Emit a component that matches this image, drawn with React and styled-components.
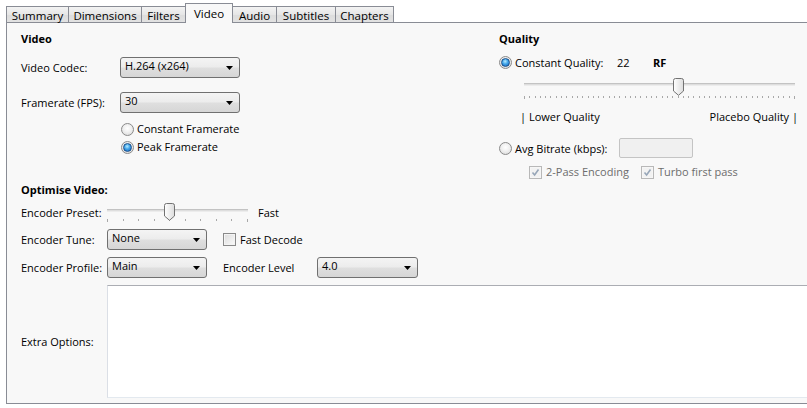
import React from 'react';
import styled, { createGlobalStyle } from 'styled-components';

const Global = createGlobalStyle`
  html, body { margin: 0; padding: 0; background: #ffffff; overflow: hidden; }
  body { font-family: "Open Sans", "Noto Sans", sans-serif; font-size: 11px; color: #000; }
  * { box-sizing: border-box; }
`;

const Page = styled.div`
  width: 807px;
  height: 408px;
  padding: 3px 0 0 6px;
  overflow: hidden;
`;

const TabStrip = styled.div`
  display: flex;
  align-items: flex-end;
  height: 19px;
  position: relative;
  z-index: 1;
`;

const Tab = styled.div`
  width: ${p => p.$w}px;
  height: ${p => (p.$active ? 20 : 16)}px;
  margin-left: ${p => (p.$first ? 0 : -1)}px;
  margin-bottom: ${p => (p.$active ? -1 : 0)}px;
  border: 1px solid #898c95;
  border-bottom: none;
  background: ${p => (p.$active ? '#f8f8f8' : 'linear-gradient(#f3f3f3, #e6e6e6 50%, #dcdcdc 51%, #e2e2e2)')};
  display: flex;
  align-items: center;
  justify-content: center;
  padding-top: ${p => (p.$active ? 0 : 1)}px;
  position: relative;
  z-index: ${p => (p.$active ? 2 : 1)};
  white-space: nowrap;
  font-size: 11.5px;
`;

const Panel = styled.div`
  width: 830px;
  height: 382px;
  border: 1px solid #898c95;
  border-right: none;
  background: #f8f8f8;
  padding: 8px 0 0 14px;
  display: flex;
  flex-direction: column;
`;

const TopSection = styled.div`
  display: flex;
  height: 151px;
  align-items: flex-start;
`;

const LeftCol = styled.div`
  width: 478px;
  display: flex;
  flex-direction: column;
`;

const RightCol = styled.div`
  display: flex;
  flex-direction: column;
`;

const SectionTitle = styled.div`
  font-weight: 700;
  line-height: 16px;
  height: 16px;
  margin-top: ${p => p.$mt || 0}px;
`;

const FieldRow = styled.div`
  display: grid;
  grid-template-columns: ${p => p.$label}px auto auto auto;
  justify-content: start;
  align-items: center;
  height: ${p => p.$h || 21}px;
  margin-top: ${p => p.$mt || 0}px;
  white-space: nowrap;
`;

const Label = styled.span`
  line-height: 16px;
  color: ${p => (p.$disabled ? '#6d6d6d' : '#000')};
`;

const LevelLabel = styled(Label)`
  width: 110px;
  padding-left: 16px;
`;

const SelectBox = styled.div`
  width: ${p => p.$w}px;
  height: ${p => p.$h || 21}px;
  border: 1px solid #707070;
  border-radius: 3px;
  background: linear-gradient(#f4f4f4 0%, #ececec 48%, #dfdfdf 52%, #d6d6d6 100%);
  display: flex;
  align-items: center;
  justify-content: space-between;
  padding: 0 6px 3px 4px;
  line-height: 14px;
`;

const Arrow = styled.svg`
  width: 7px;
  height: 4px;
  margin-top: 4px;
`;

const Select = ({ w, value, h }) => (
  <SelectBox $w={w} $h={h}>
    <span>{value}</span>
    <Arrow viewBox="0 0 7 4"><path d="M0 0 H7 L3.5 4 Z" fill="#000" /></Arrow>
  </SelectBox>
);

const RadioGroup = styled.div`
  display: flex;
  flex-direction: column;
  margin: ${p => p.$mt || 0}px 0 0 ${p => p.$ml || 0}px;
`;

const OptionRow = styled.div`
  display: flex;
  align-items: center;
  gap: ${p => p.$gap ?? 3}px;
  height: ${p => p.$h || 18}px;
  margin: ${p => p.$mt || 0}px 0 0 ${p => p.$ml || 0}px;
  white-space: nowrap;
`;

const RadioCircle = styled.span`
  width: 13px;
  height: 13px;
  border-radius: 50%;
  border: 1px solid #8a8a8a;
  background: radial-gradient(circle at 50% 40%, #ffffff 0%, #f0f0f0 45%, #d4d4d4 100%);
  display: inline-flex;
  align-items: center;
  justify-content: center;
  flex: none;
  &::after {
    content: '';
    display: ${p => (p.$checked ? 'block' : 'none')};
    width: 7px;
    height: 7px;
    border-radius: 50%;
    border: 1px solid #1b4f8a;
    background: radial-gradient(circle at 45% 35%, #b8ecff 0%, #3fa3e8 45%, #1560b8 100%);
  }
`;

const CheckBox = styled.span`
  width: 13px;
  height: 13px;
  border: 1px solid ${p => (p.$disabled ? '#b8b8b8' : '#8a8a8a')};
  background: ${p => (p.$disabled ? '#f2f2f2' : 'linear-gradient(135deg, #dcdcdc, #fbfbfb)')};
  box-shadow: inset 0 0 0 1px ${p => (p.$disabled ? '#f6f6f6' : '#f4f4f4')};
  display: inline-flex;
  align-items: center;
  justify-content: center;
  flex: none;
`;

const CheckMark = styled.svg`
  width: 9px;
  height: 9px;
`;

const Check = ({ checked, disabled }) => (
  <CheckBox $disabled={disabled}>
    {checked && (
      <CheckMark viewBox="0 0 9 9">
        <path d="M1.5 4.5 L3.6 7 L7.5 1.5" fill="none" stroke={disabled ? '#97a6b8' : '#2b4f7e'} strokeWidth="1.6" />
      </CheckMark>
    )}
  </CheckBox>
);

const SliderBox = styled.div`
  position: relative;
  width: ${p => p.$w}px;
  height: ${p => p.$h}px;
  margin: ${p => p.$mt || 0}px 0 0 ${p => p.$ml || 0}px;
  flex: none;
`;

const Track = styled.div`
  position: absolute;
  left: 0;
  right: 0;
  top: ${p => p.$top}px;
  height: 3px;
  border-top: 1px solid #c3c3c3;
  border-bottom: 1px solid #ececec;
  background: #dedede;
`;

const Ticks = styled.svg`
  position: absolute;
  left: 0;
  top: ${p => p.$top}px;
  overflow: visible;
`;

const ThumbSvg = styled.svg`
  position: absolute;
  top: ${p => p.$top}px;
  width: 11px;
  height: 18px;
`;

const Slider = ({ width, height, count, value, trackTop, thumbTop, tickTop, tickLen, mt, ml }) => {
  const step = width / (count - 1);
  const ticks = [];
  for (let i = 0; i < count; i++) {
    const x = Math.round(i * step) + 0.5;
    const end = i === 0 || i === count - 1;
    ticks.push(<line key={i} x1={x} x2={x} y1={0} y2={end ? tickLen + 1 : tickLen} stroke="#a8a8a8" strokeWidth="1" />);
  }
  const thumbLeft = Math.round(value * step) - 5;
  return (
    <SliderBox $w={width + 1} $h={height} $mt={mt} $ml={ml}>
      <Track $top={trackTop} />
      <Ticks $top={tickTop} width={width + 1} height={tickLen + 1}>{ticks}</Ticks>
      <ThumbSvg $top={thumbTop} style={{ left: thumbLeft }} viewBox="0 0 11 18">
        <defs>
          <linearGradient id="thumbg" x1="0" x2="1" y1="0" y2="0">
            <stop offset="0" stopColor="#ffffff" />
            <stop offset="1" stopColor="#dcdcdc" />
          </linearGradient>
        </defs>
        <path d="M0.5 2.5 Q0.5 0.5 2.5 0.5 H8.5 Q10.5 0.5 10.5 2.5 V13 L5.5 17.3 L0.5 13 Z" fill="url(#thumbg)" stroke="#727272" strokeWidth="1" />
      </ThumbSvg>
    </SliderBox>
  );
};

const ValueText = styled.span`
  width: ${p => p.$w}px;
  font-weight: ${p => (p.$bold ? 700 : 400)};
`;

const ScaleLabels = styled.div`
  display: flex;
  justify-content: space-between;
  width: 278px;
  margin: 9px 0 0 21px;
  line-height: 16px;
`;

const TextInput = styled.div`
  width: 74px;
  height: 20px;
  border: 1px solid #c4c4c4;
  border-radius: 2px;
  background: #f0f0f0;
`;

const CheckGroup = styled.div`
  display: flex;
  align-items: center;
  width: ${p => p.$w || 'auto'};
  gap: 4px;
`;

const OptSection = styled.div`
  display: flex;
  flex-direction: column;
`;

const FastLabel = styled.span`
  margin-left: 10px;
  line-height: 16px;
`;

const Spacer = styled.span`
  width: ${p => p.$w}px;
`;

const ExtraRow = styled.div`
  display: grid;
  grid-template-columns: 86px 720px;
  align-items: center;
  margin-top: 7px;
`;

const TextArea = styled.div`
  height: 113px;
  background: #ffffff;
  border-top: 1px solid #abadb3;
  border-left: 1px solid #dbdfe6;
  border-bottom: 1px solid #e3e9ef;
`;

export default function App() {
  const tabs = [
    ['Summary', 63], ['Dimensions', 74], ['Filters', 45], ['Video', 48],
    ['Audio', 45], ['Subtitles', 60], ['Chapters', 59],
  ];
  return (
    <Page>
      <Global />
      <TabStrip>
        {tabs.map(([t, w], i) => (
          <Tab key={t} $w={w} $first={i === 0} $active={t === 'Video'}>{t}</Tab>
        ))}
      </TabStrip>
      <Panel>
        <TopSection>
          <LeftCol>
            <SectionTitle>Video</SectionTitle>
            <FieldRow $label={99} $mt={10}>
              <Label>Video Codec:</Label>
              <Select w={120} value="H.264 (x264)" />
            </FieldRow>
            <FieldRow $label={99} $mt={14}>
              <Label>Framerate (FPS):</Label>
              <Select w={120} value="30" />
            </FieldRow>
            <RadioGroup $mt={7} $ml={100}>
              <OptionRow><RadioCircle /><Label>Constant Framerate</Label></OptionRow>
              <OptionRow><RadioCircle $checked /><Label>Peak Framerate</Label></OptionRow>
            </RadioGroup>
          </LeftCol>
          <RightCol>
            <SectionTitle>Quality</SectionTitle>
            <OptionRow $h={16} $mt={7}>
              <RadioCircle $checked />
              <ValueText $w={99}>Constant Quality:</ValueText>
              <ValueText $w={33}>22</ValueText>
              <ValueText $bold>RF</ValueText>
            </OptionRow>
            <Slider width={270} height={24} count={52} value={29} trackTop={7} thumbTop={2} tickTop={20} tickLen={2} mt={6} ml={25} />
            <ScaleLabels>
              <span>| Lower Quality</span>
              <span>Placebo Quality |</span>
            </ScaleLabels>
            <OptionRow $h={20} $mt={13}>
              <RadioCircle />
              <ValueText $w={101}>Avg Bitrate (kbps):</ValueText>
              <TextInput />
            </OptionRow>
            <OptionRow $h={16} $mt={6} $ml={30} $gap={0}>
              <CheckGroup $w="112px"><Check checked disabled /><Label $disabled>2-Pass Encoding</Label></CheckGroup>
              <CheckGroup><Check checked disabled /><Label $disabled>Turbo first pass</Label></CheckGroup>
            </OptionRow>
          </RightCol>
        </TopSection>
        <OptSection>
          <SectionTitle>Optimise Video:</SectionTitle>
          <FieldRow $label={86} $h={22} $mt={4}>
            <Label>Encoder Preset:</Label>
            <Slider width={140} height={22} count={10} value={4} trackTop={7} thumbTop={1} tickTop={17} tickLen={2} />
            <FastLabel>Fast</FastLabel>
          </FieldRow>
          <FieldRow $label={86} $mt={5}>
            <Label>Encoder Tune:</Label>
            <Select w={100} value="None" />
            <Spacer $w={16} />
            <CheckGroup><Check /><Label>Fast Decode</Label></CheckGroup>
          </FieldRow>
          <FieldRow $label={86} $mt={7}>
            <Label>Encoder Profile:</Label>
            <Select w={100} value="Main" />
            <LevelLabel>Encoder Level</LevelLabel>
            <Select w={101} value="4.0" />
          </FieldRow>
          <ExtraRow>
            <Label>Extra Options:</Label>
            <TextArea />
          </ExtraRow>
        </OptSection>
      </Panel>
    </Page>
  );
}
